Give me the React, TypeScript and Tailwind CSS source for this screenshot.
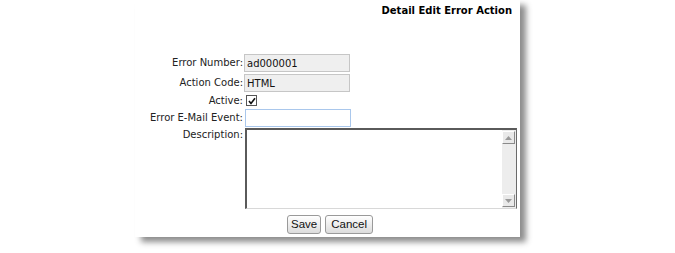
import { useState } from "react";

const font = { fontFamily: '"DejaVu Sans", Verdana, sans-serif' };

function ScrollArrow({ up }: { up?: boolean }) {
  return (
    <div className="w-[13px] h-[13px] bg-[#e9e9e9] border border-t-white border-l-white border-b-[#8a8a8a] border-r-[#8a8a8a] flex items-center justify-center">
      <svg width="7" height="4" viewBox="0 0 7 4">
        {up ? (
          <polygon points="3.5,0 7,4 0,4" fill="#9a9a9a" />
        ) : (
          <polygon points="0,0 7,0 3.5,4" fill="#9a9a9a" />
        )}
      </svg>
    </div>
  );
}

export default function App() {
  const [active, setActive] = useState(true);

  return (
    <div className="w-[675px] h-[253px] bg-white overflow-hidden" style={font}>
      <div className="ml-[135px] w-[385px] h-[237px] bg-white shadow-[6px_5px_6px_rgba(0,0,0,0.45)] flex flex-col">
        <div className="pt-[5px] pr-[8px] text-right text-[10px] font-bold text-black leading-[12px]">
          Detail Edit Error Action
        </div>

        <div className="mt-[37px] grid grid-cols-[109px_1fr] gap-y-[1px] text-[10px] text-[#222]">
          <label className="text-right pr-[1px] leading-[18px]">Error Number:</label>
          <input
            readOnly
            value="ad000001"
            className="w-[106px] h-[18px] px-[2px] bg-[#efefef] border border-[#c6c6c6] text-[10px] outline-none text-[#111]"
          />

          <label className="text-right pr-[1px] leading-[18px] mt-[1px]">Action Code:</label>
          <input
            readOnly
            value="HTML"
            className="mt-[1px] w-[106px] h-[18px] px-[2px] bg-[#efefef] border border-[#c6c6c6] text-[10px] outline-none text-[#111]"
          />

          <label className="text-right pr-[1px] leading-[15px]">Active:</label>
          <div className="h-[15px] flex items-center pl-[2px]">
            <button
              onClick={() => setActive(!active)}
              className="w-[11px] h-[11px] border border-[#555] bg-white flex items-center justify-center"
            >
              {active && (
                <svg width="8" height="8" viewBox="0 0 8 8">
                  <polyline points="1,4 3,6.5 7,1.2" fill="none" stroke="#111" strokeWidth="1.6" />
                </svg>
              )}
            </button>
          </div>

          <label className="text-right pr-[1px] leading-[18px]">Error E-Mail Event:</label>
          <input className="ml-[1px] w-[106px] h-[18px] px-[2px] bg-white border border-[#a9c7ec] text-[10px] outline-none" />

          <label className="text-right pr-[1px] leading-[14px]">Description:</label>
          <div className="ml-[1px] w-[272px] h-[81px] flex border-t-2 border-l-2 border-t-[#5a5a5a] border-l-[#5a5a5a] border-b border-r border-b-[#d8d8d8] border-r-[#6a6a6a]">
            <textarea className="flex-1 resize-none outline-none text-[10px] px-[2px] bg-white overflow-hidden" />
            <div className="w-[14px] flex flex-col justify-between bg-[#ededed] pt-[1px] pb-[1px]">
              <ScrollArrow up />
              <ScrollArrow />
            </div>
          </div>
        </div>

        <div
          className="mt-[6px] flex justify-center gap-[4px] pl-[5px]"
          style={{ fontFamily: '"Liberation Sans", Arial, sans-serif' }}
        >
          <button className="h-[19px] px-[3px] text-[11.5px] leading-none text-[#111] border border-[#9a9a9a] rounded-[3px] bg-gradient-to-b from-white to-[#dcdcdc]">
            Save
          </button>
          <button className="h-[19px] px-[5px] text-[11.5px] leading-none text-[#111] border border-[#9a9a9a] rounded-[3px] bg-gradient-to-b from-white to-[#dcdcdc]">
            Cancel
          </button>
        </div>
      </div>
    </div>
  );
}
